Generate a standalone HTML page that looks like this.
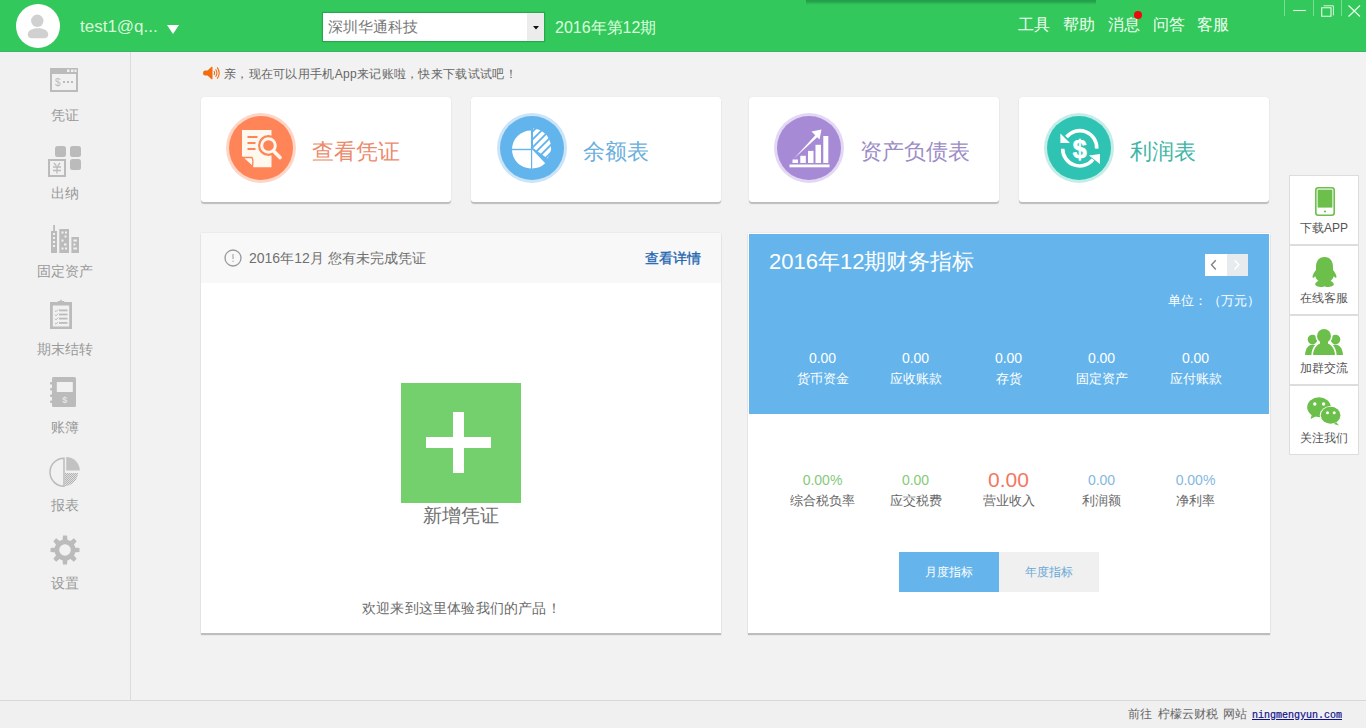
<!DOCTYPE html>
<html><head><meta charset="utf-8">
<style>
*{margin:0;padding:0;box-sizing:border-box}
html,body{width:1366px;height:728px;overflow:hidden;background:#f2f2f2;font-family:"Liberation Sans",sans-serif;color:#666;position:relative}
.a{position:absolute;white-space:nowrap}
svg{display:block}
#hdr{left:0;top:0;width:1366px;height:52px;background:#32c85c}
#side{left:0;top:52px;width:131px;height:648px;background:#f1f1f1;border-right:1px solid #dcdcdc}
#foot{left:0;top:700px;width:1366px;height:28px;border-top:1px solid #d8d8d8;background:#f0f0f0}
.card{background:#fff;border-radius:3px;box-shadow:0 2px 1px #bdbdbd,0 0 1px #cfcfcf;width:250px;height:105px;top:97px}
.nav{left:0;width:130px;text-align:center;font-size:14px;line-height:14px;color:#999}
.ico{left:0;width:130px}
.ico svg{margin:0 auto}
.menu{top:16px;font-size:16px;line-height:17px;color:#f2fff2}
.ctit{top:140px;font-size:21.5px;line-height:24px}
.circ{top:113px;width:70px;height:70px;border-radius:50%}
.col{width:93px;text-align:center}
.bv{top:351px;font-size:14px;line-height:15px;color:#fff}
.bl{top:371px;font-size:13px;line-height:15px;color:#fff}
.wv{top:472px;font-size:14px;line-height:16px}
.wl{top:493px;font-size:13px;line-height:15px;color:#666}
.rb{left:1289px;width:70px;height:70px;background:#fff;border:1px solid #ddd;text-align:center;font-size:12px;color:#555}
.rb svg{position:absolute}
.rb span{position:absolute;left:0;width:68px;text-align:center;line-height:12px}
</style></head><body>
<div id="hdr" class="a"></div>
<div class="a" style="left:0;top:51px;width:1366px;height:1px;background:#3bb466"></div>
<div id="side" class="a"></div>
<div id="foot" class="a"></div>

<!-- header contents -->
<div class="a" style="left:806px;top:0;width:290px;height:5px;background:linear-gradient(#22a049 0,#23a24a 1.5px,rgba(38,168,78,.6) 3px,rgba(50,200,92,0) 5px)"></div>
<div class="a" style="left:16px;top:4px;width:44px;height:44px;border-radius:50%;background:#fff;overflow:hidden">
  <svg width="44" height="44" viewBox="0 0 44 44"><circle cx="21.3" cy="16.8" r="6.2" fill="#d0d0d0"/><path d="M11.8 30.5C11.8 26.5 16.5 24.3 22 24.3C27.5 24.3 32.2 26.5 32.2 30.5C32.2 33.2 30.5 34.2 28.2 34.2H15.8C13.5 34.2 11.8 33.2 11.8 30.5z" fill="#d0d0d0"/></svg>
</div>
<div class="a" style="left:80px;top:17px;font-size:17px;line-height:20px;color:#d9f8d9">test1@q...</div>
<svg class="a" style="left:166px;top:24px" width="14" height="11" viewBox="0 0 14 11"><path d="M1 1h12L7 10z" fill="#fff"/></svg>
<div class="a" style="left:323px;top:13px;width:221px;height:28px;background:#fff;box-shadow:0 0 1px 1px rgba(20,110,50,.35)">
  <div class="a" style="left:5px;top:5px;font-size:15px;line-height:18px;color:#777">深圳华通科技</div>
  <div class="a" style="left:204px;top:0;width:17px;height:28px;background:#ececec"></div>
  <svg class="a" style="left:209.5px;top:13px" width="6" height="4" viewBox="0 0 6 4"><path d="M0 0h6L3 3.5z" fill="#111"/></svg>
</div>
<div class="a" style="left:555px;top:19px;font-size:16px;line-height:18px;color:#dcffdc">2016年第12期</div>
<div class="a menu" style="left:1018px">工具</div>
<div class="a menu" style="left:1063px">帮助</div>
<div class="a menu" style="left:1108px">消息</div>
<div class="a menu" style="left:1153px">问答</div>
<div class="a menu" style="left:1197px">客服</div>
<div class="a" style="left:1134px;top:10.8px;width:8px;height:8px;border-radius:50%;background:#ee0a0a"></div>
<!-- window controls -->
<div class="a" style="left:1284px;top:0;width:1px;height:16px;background:#7ade92"></div>
<div class="a" style="left:1313px;top:0;width:1px;height:16px;background:#7ade92"></div>
<div class="a" style="left:1341px;top:0;width:1px;height:16px;background:#7ade92"></div>
<svg class="a" style="left:1290px;top:0" width="76" height="20" viewBox="0 0 76 20">
 <path d="M3.2 10.5h12.6" stroke="#e8ffe8" stroke-width="1.1"/>
 <path d="M31.7 7.7h9.3v8.6h-9.3z" stroke="#e8ffe8" stroke-width="1.1" fill="none"/>
 <path d="M33.5 5.8h9.9v9.6" stroke="#d8f8d8" stroke-width="1" fill="none"/>
 <path d="M58.5 5.5l11.5 11M70 5.5l-11.5 11" stroke="#e8ffe8" stroke-width="1.2"/>
</svg>
<!-- sidebar -->
<div class="a ico" style="top:68px;left:-1px"><svg width="28" height="24" viewBox="0 0 28 24"><rect x="1" y="1" width="26" height="22" fill="none" stroke="#bbb" stroke-width="2"/><rect x="0" y="0" width="28" height="6" fill="#bbb"/><rect x="17" y="1.5" width="2.5" height="2.5" fill="#f1f1f1"/><rect x="21" y="1.5" width="2.5" height="2.5" fill="#f1f1f1"/><rect x="24.5" y="1.5" width="2" height="2.5" fill="#f1f1f1"/><text x="5" y="18" font-size="10" fill="#bbb" font-family="Liberation Sans">$</text><rect x="13" y="13" width="2" height="2" fill="#bbb"/><rect x="17" y="13" width="2" height="2" fill="#bbb"/><rect x="21" y="13" width="2" height="2" fill="#bbb"/></svg></div>
<div class="a nav" style="top:108px">凭证</div>
<div class="a ico" style="top:146px"><svg width="34" height="31" viewBox="0 0 34 31"><rect x="7" y="0" width="11" height="11" rx="2.5" fill="#bbb"/><rect x="22" y="0" width="11" height="11" rx="2.5" fill="#bbb"/><rect x="22" y="13" width="11" height="11" rx="2.5" fill="#bbb"/><rect x="1" y="14" width="16" height="16" fill="none" stroke="#bbb" stroke-width="2"/><path d="M6 17l2 2.5M12 17l-2 2.5M5 21h8M5 24.5h8M9 19.5v8" stroke="#bbb" stroke-width="1.3" fill="none"/></svg></div>
<div class="a nav" style="top:186px">出纳</div>
<svg class="a" style="left:51px;top:225px" width="28" height="28" viewBox="0 0 28 28"><g fill="#bbb"><rect x="0" y="6" width="6" height="22"/><rect x="2.2" y="0" width="1.8" height="6"/><rect x="8.3" y="4" width="9.7" height="24"/><rect x="20.4" y="12" width="7.6" height="16"/></g><g fill="#f1f1f1"><rect x="2" y="8" width="2" height="2"/><rect x="2" y="12" width="2" height="2"/><rect x="2" y="16" width="2" height="2"/><rect x="2" y="20" width="2" height="2"/><rect x="10.5" y="6.5" width="2" height="2"/><rect x="14" y="6.5" width="2" height="2"/><rect x="13.5" y="10.5" width="2" height="2"/><rect x="10.5" y="14.5" width="2" height="2"/><rect x="13" y="18.5" width="2.5" height="2"/><rect x="10.5" y="22.5" width="2" height="2"/><rect x="14" y="22.5" width="2" height="2"/><rect x="22.4" y="14.5" width="3.5" height="2"/><rect x="22.4" y="18.5" width="2" height="2"/><rect x="22.4" y="22.5" width="3.5" height="2"/></g></svg>
<div class="a nav" style="top:264px">固定资产</div>
<svg class="a" style="left:50px;top:299px" width="23" height="31" viewBox="0 0 23 31"><rect x="0" y="3" width="22" height="27" fill="#bbb"/><rect x="2.8" y="6.5" width="16.4" height="21" fill="#f1f1f1"/><path d="M6.5 5.5L8 2H10L11 0.3L12 2H14L15.5 5.5z" fill="#bbb"/><g fill="#bbb"><rect x="9" y="10.5" width="8.5" height="1.8"/><rect x="9" y="14.6" width="8.5" height="1.8"/><rect x="9" y="18.7" width="8.5" height="1.8"/><rect x="9" y="23" width="8.5" height="1.8"/></g><g stroke="#bbb" stroke-width="1" fill="none"><path d="M4.8 11.5l1.2 1.2l2-2.2M4.8 15.6l1.2 1.2l2-2.2M4.8 19.7l1.2 1.2l2-2.2M4.8 24l1.2 1.2l2-2.2"/></g></svg>
<div class="a nav" style="top:342px">期末结转</div>
<svg class="a" style="left:50px;top:376px" width="27" height="32" viewBox="0 0 27 32"><rect x="2" y="1" width="24" height="30" rx="1.5" fill="#bbb"/><rect x="6.8" y="6" width="16" height="10" fill="#f1f1f1"/><g fill="#bbb"><rect x="0" y="6" width="4" height="2.6" rx="1"/><rect x="0" y="12" width="4" height="2.6" rx="1"/><rect x="0" y="18.5" width="4" height="2.6" rx="1"/><rect x="0" y="24.5" width="4" height="2.6" rx="1"/></g><text x="14.8" y="27" font-size="9" font-weight="bold" text-anchor="middle" fill="#e4e4e4" font-family="Liberation Sans">$</text></svg>
<div class="a nav" style="top:420px">账簿</div>
<svg class="a" style="left:49px;top:455px" width="33" height="33" viewBox="0 0 33 33"><defs><pattern id="ht" width="2" height="2" patternUnits="userSpaceOnUse"><rect width="2" height="2" fill="#dedede"/><rect width="1" height="1" fill="#b4b4b4"/><rect x="1" y="1" width="1" height="1" fill="#b4b4b4"/></pattern></defs><path d="M15 3.2A14 14 0 0 0 15 31.2z" fill="none" stroke="#bbb" stroke-width="1.5"/><path d="M17.2 2A13.6 13.6 0 0 1 30.8 15.6H17.2z" fill="#c2c2c2"/><path d="M15.8 18H29A14 14 0 0 1 15.8 31.2z" fill="url(#ht)"/></svg>
<div class="a nav" style="top:498px">报表</div>
<svg class="a" style="left:50px;top:535px" width="30" height="30" viewBox="0 0 30 30"><g fill="#bbb"><circle cx="15" cy="15" r="10.5"/><g id="tooth"><path d="M13 0.5H17L17.6 6H12.4z"/><path d="M13 29.5H17L17.6 24H12.4z"/></g><use href="#tooth" transform="rotate(45 15 15)"/><use href="#tooth" transform="rotate(90 15 15)"/><use href="#tooth" transform="rotate(135 15 15)"/></g><circle cx="15" cy="15" r="5.8" fill="#f1f1f1"/></svg>
<div class="a nav" style="top:576px">设置</div>

<!-- notice -->
<svg class="a" style="left:203px;top:65.5px" width="17" height="14" viewBox="0 0 17 14"><path d="M2 4.5H4.5L8.5 0.8Q9.5 0.3 9.5 1.5V12.5Q9.5 13.7 8.5 13.2L4.5 9.5H2Q0 9.5 0 7Q0 4.5 2 4.5z" fill="#f26d12"/><path d="M11 5q1.2 2 0 4M12.6 3.2q2.6 3.8 0 7.6M14.2 1.4q4 5.6 0 11.2" stroke="#f26d12" stroke-width="1.1" fill="none"/></svg>
<div class="a" style="left:224px;top:67px;font-size:12px;line-height:14px;color:#666;letter-spacing:0.3px">亲，现在可以用手机App来记账啦，快来下载试试吧！</div>

<!-- cards -->
<div class="card a" style="left:201px"></div>
<div class="card a" style="left:471px"></div>
<div class="card a" style="left:749px"></div>
<div class="card a" style="left:1019px"></div>

<svg class="a" style="left:226px;top:113px" width="70" height="70" viewBox="0 0 70 70">
 <circle cx="35" cy="35" r="35" fill="#fdd6c8"/><circle cx="35" cy="35" r="32" fill="#ff8457"/>
 <path d="M16 17H45.5V54.3H27.5L16 43z" fill="#fff8ee"/>
 <path d="M16.5 44.5L26 44.5Q27.5 47 26.5 53.5z" fill="#fff8ee" stroke="#ff8457" stroke-width="1.3"/>
 <rect x="21.5" y="23" width="10" height="2" fill="#ff8457"/><rect x="21.5" y="29" width="8" height="2" fill="#ff8457"/><rect x="21.5" y="35" width="8" height="2" fill="#ff8457"/>
 <circle cx="42.5" cy="32.5" r="10.5" fill="#ff8457"/>
 <path d="M47.5 38.5L54.5 45.5" stroke="#ff8457" stroke-width="7" stroke-linecap="round"/>
 <circle cx="42.5" cy="32.5" r="6.8" fill="none" stroke="#fff8ee" stroke-width="3"/>
 <path d="M47.8 38.3L54 44.5" stroke="#fff8ee" stroke-width="3.6" stroke-linecap="round"/>
</svg>
<div class="a ctit" style="left:312px;color:#ec8a6c">查看凭证</div>
<svg class="a" style="left:497px;top:113px" width="70" height="70" viewBox="0 0 70 70">
 <defs><pattern id="st" width="5.6" height="5.6" patternUnits="userSpaceOnUse" patternTransform="rotate(-45)"><rect width="5.6" height="5.6" fill="#62b4ec"/><rect width="5.6" height="3.7" fill="#fff"/></pattern></defs>
 <circle cx="35" cy="35" r="35" fill="#cbe4f8"/><circle cx="35" cy="35" r="32" fill="#62b4ec"/>
 <path d="M34 17.5A19 19 0 0 0 34 55.5z" fill="#fff"/>
 <path d="M15 36.5H34" stroke="#62b4ec" stroke-width="1.4"/>
 <path d="M35.2 36.5V55.5A19 19 0 0 0 48.2 50.3z" fill="#fff"/>
 <path d="M36 15.5A19 19 0 0 1 50.5 45.5L36 35z" fill="url(#st)"/>
</svg>
<div class="a ctit" style="left:583px;color:#6cafdc">余额表</div>
<svg class="a" style="left:774px;top:113px" width="70" height="70" viewBox="0 0 70 70">
 <circle cx="35" cy="35" r="35" fill="#e2d8f3"/><circle cx="35" cy="35" r="32" fill="#a78ad6"/>
 <g fill="#fff"><rect x="15.5" y="51.5" width="40" height="2.8"/>
 <rect x="18.5" y="46.5" width="5.5" height="3.5"/><rect x="26.3" y="42.8" width="5.5" height="7.2"/><rect x="34" y="37.9" width="5.5" height="12.1"/><rect x="41.5" y="31.8" width="5.5" height="18.2"/><rect x="49.3" y="23" width="5" height="27"/>
 <path d="M20 45.5L42 21.5L44 23.5z"/><path d="M47.5 16.5L37.5 18.5L45.5 26.5z"/></g>
</svg>
<div class="a ctit" style="left:860px;color:#9c8dc6">资产负债表</div>
<svg class="a" style="left:1044px;top:113px" width="70" height="70" viewBox="0 0 70 70">
 <circle cx="35" cy="35" r="35" fill="#c4ede8"/><circle cx="35" cy="35" r="32" fill="#2fc3b4"/>
 <g fill="none" stroke="#fff" stroke-width="3.6"><path d="M22.5 24A17 17 0 0 1 52.7 35.7"/><path d="M18.7 35.7A17 17 0 0 0 49 46.5"/></g>
 <g fill="#fff"><path d="M16.4 20.5V30H26z"/><path d="M45 42.5L56 41V51z"/></g>
 <text x="35.7" y="45" font-size="25" font-weight="bold" fill="#fff" stroke="#fff" stroke-width="0.7" text-anchor="middle" font-family="Liberation Sans">$</text>
</svg>
<div class="a ctit" style="left:1130px;color:#40b5a6">利润表</div>

<!-- left panel -->
<div class="a" style="left:201px;top:233px;width:520px;height:400px;background:#fff;box-shadow:0 2px 1px #bdbdbd,0 0 1px #cfcfcf"></div>
<div class="a" style="left:201px;top:233px;width:520px;height:50px;background:#f8f8f8"></div>
<svg class="a" style="left:224px;top:249px" width="18" height="18" viewBox="0 0 18 18"><circle cx="9" cy="9" r="8" fill="none" stroke="#999" stroke-width="1.3"/><path d="M9 5v5" stroke="#aaa" stroke-width="1.2"/><circle cx="9" cy="12.3" r="0.7" fill="#aaa"/></svg>
<div class="a" style="left:249px;top:250px;font-size:14px;line-height:16px;color:#707070">2016年12月 您有未完成凭证</div>
<div class="a" style="left:645px;top:250px;font-size:14px;line-height:16px;color:#1a64b0;-webkit-text-stroke:0.3px #1a64b0">查看详情</div>
<div class="a" style="left:401px;top:383px;width:120px;height:120px;background:#74d06c"></div>
<div class="a" style="left:426px;top:437px;width:65px;height:11px;background:#fff"></div>
<div class="a" style="left:453px;top:412px;width:11px;height:61px;background:#fff"></div>
<div class="a" style="left:423px;top:505px;font-size:19px;line-height:22px;color:#707070">新增凭证</div>
<div class="a" style="left:362px;top:601px;font-size:14px;line-height:15px;color:#6a6a6a;letter-spacing:0.2px">欢迎来到这里体验我们的产品！</div>

<!-- right panel -->
<div class="a" style="left:748px;top:233px;width:522px;height:400px;background:#fff;box-shadow:0 2px 1px #bdbdbd,0 0 1px #cfcfcf"></div>
<div class="a" style="left:749px;top:234px;width:520px;height:180px;background:#65b5ec"></div>
<div class="a" style="left:769px;top:250px;font-size:22px;line-height:24px;color:#fff">2016年12期财务指标</div>
<div class="a" style="left:1205px;top:254px;width:21.5px;height:21.5px;background:#fff"></div>
<div class="a" style="left:1226.5px;top:254px;width:21.5px;height:21.5px;background:#e8ebee"></div>
<svg class="a" style="left:1205px;top:254px" width="43" height="22" viewBox="0 0 43 22"><path d="M10.8 6.2L6.5 10.8L10.8 15.4" stroke="#808080" stroke-width="1.4" fill="none"/><path d="M29.5 6.2L33.8 10.8L29.5 15.4" stroke="#fff" stroke-width="1.4" fill="none"/></svg>
<div class="a" style="left:1168px;top:294px;font-size:12.5px;line-height:14px;color:#fff;letter-spacing:0.2px">单位：（万元）</div>

<div class="a col bv" style="left:776px">0.00</div><div class="a col bl" style="left:776px">货币资金</div>
<div class="a col bv" style="left:869px">0.00</div><div class="a col bl" style="left:869px">应收账款</div>
<div class="a col bv" style="left:962px">0.00</div><div class="a col bl" style="left:962px">存货</div>
<div class="a col bv" style="left:1055px">0.00</div><div class="a col bl" style="left:1055px">固定资产</div>
<div class="a col bv" style="left:1149px">0.00</div><div class="a col bl" style="left:1149px">应付账款</div>

<div class="a col wv" style="left:776px;color:#84ca7a">0.00%</div><div class="a col wl" style="left:776px">综合税负率</div>
<div class="a col wv" style="left:869px;color:#84ca7a">0.00</div><div class="a col wl" style="left:869px">应交税费</div>
<div class="a col wv" style="left:962px;color:#f27860;font-size:21px;top:469px;line-height:22px">0.00</div><div class="a col wl" style="left:962px">营业收入</div>
<div class="a col wv" style="left:1055px;color:#82b9e0">0.00</div><div class="a col wl" style="left:1055px">利润额</div>
<div class="a col wv" style="left:1149px;color:#82b9e0">0.00%</div><div class="a col wl" style="left:1149px">净利率</div>

<div class="a" style="left:899px;top:552px;width:100px;height:40px;background:#65b5ec;color:#fff;font-size:12px;line-height:40px;text-align:center">月度指标</div>
<div class="a" style="left:999px;top:552px;width:100px;height:40px;background:#f0f0f0;color:#6aa8d8;font-size:12px;line-height:40px;text-align:center">年度指标</div>

<!-- right float -->
<div class="a rb" style="top:175px"><svg style="left:24.5px;top:11px" width="20" height="29" viewBox="0 0 20 29"><rect x="0.8" y="0.8" width="18.4" height="27.4" rx="2.5" fill="#fff" stroke="#6dbf4c" stroke-width="1.6"/><rect x="2.6" y="2.6" width="14.8" height="18" fill="#6dbf4c"/><circle cx="10" cy="24.5" r="1.1" fill="#6dbf4c"/></svg><span style="top:46px">下载APP</span></div>
<div class="a rb" style="top:245px"><svg style="left:22px;top:11px" width="25" height="30" viewBox="0 0 25 30"><path d="M12.5 0C6.5 0 4 4.5 4 10v3c-2 2.5-3.5 5-3.5 7 0 1 .7 1.2 2 0l.8-.8c.5 2 1.7 3.6 3.2 4.9-2 .7-3.3 1.9-3.3 3.2C3.2 29 6 30 9.5 30c1.4 0 2.5-.3 3-.7.5.4 1.6.7 3 .7 3.5 0 6.300-1 6.300-2.700 0-1.300-1.300-2.500-3.300-3.200 1.500-1.300 2.700-2.900 3.200-4.900l.8.8c1.300 1.200 2 1 2 0 0-2-1.500-4.500-3.500-7v-3C21 4.500 18.500 0 12.500 0z" fill="#6dbf4c"/></svg><span style="top:46px">在线客服</span></div>
<div class="a rb" style="top:315px"><svg style="left:14px;top:11px" width="40" height="29" viewBox="0 0 40 29"><g fill="#6dbf4c"><circle cx="8.5" cy="12.5" r="4.8"/><path d="M1 28C1.5 21 4.5 17.5 9 17.5L13 18.5V28z"/><circle cx="31.5" cy="12.5" r="4.8"/><path d="M39 28C38.5 21 35.5 17.5 31 17.5L27 18.5V28z"/></g><g fill="#fff" stroke="#fff" stroke-width="3.2"><circle cx="20" cy="9" r="7"/><path d="M9 28C9.5 20.5 13.5 16 20 16C26.5 16 30.5 20.5 31 28z"/></g><g fill="#6dbf4c"><circle cx="20" cy="9" r="7"/><path d="M9 28C9.5 20.5 13.5 16 20 16C26.5 16 30.5 20.5 31 28z"/><rect x="16" y="13" width="8" height="5"/></g></svg><span style="top:46px">加群交流</span></div>
<div class="a rb" style="top:385px"><svg style="left:17px;top:11px" width="36" height="30" viewBox="0 0 36 30"><ellipse cx="12" cy="10.3" rx="11.8" ry="10" fill="#6dbf4c"/><path d="M5 17l-1.5 5 6-3z" fill="#6dbf4c"/><ellipse cx="23.6" cy="18.3" rx="10.8" ry="9.3" fill="#fff"/><ellipse cx="23.6" cy="18.3" rx="9.8" ry="8.5" fill="#6dbf4c"/><path d="M29 25l3 3.5-5-1.5z" fill="#6dbf4c"/><g fill="#fff"><circle cx="7.8" cy="7" r="1.7"/><circle cx="16.6" cy="7" r="1.7"/><circle cx="20.5" cy="15.8" r="1.5"/><circle cx="27.2" cy="15.8" r="1.5"/></g></svg><span style="top:46px">关注我们</span></div>

<!-- footer -->
<div class="a" style="left:1128px;top:707px;font-size:12px;line-height:15px;color:#666">前往</div>
<div class="a" style="left:1158px;top:707px;font-size:12px;line-height:15px;color:#666">柠檬云财税</div>
<div class="a" style="left:1223px;top:707px;font-size:12px;line-height:15px;color:#666">网站</div>
<div class="a" style="left:1252px;top:708px;font-family:'Liberation Mono',monospace;font-size:10px;line-height:15px;color:#10108a;text-decoration:underline;-webkit-text-stroke:0.2px #10108a">ningmengyun.com</div>
</body></html>
